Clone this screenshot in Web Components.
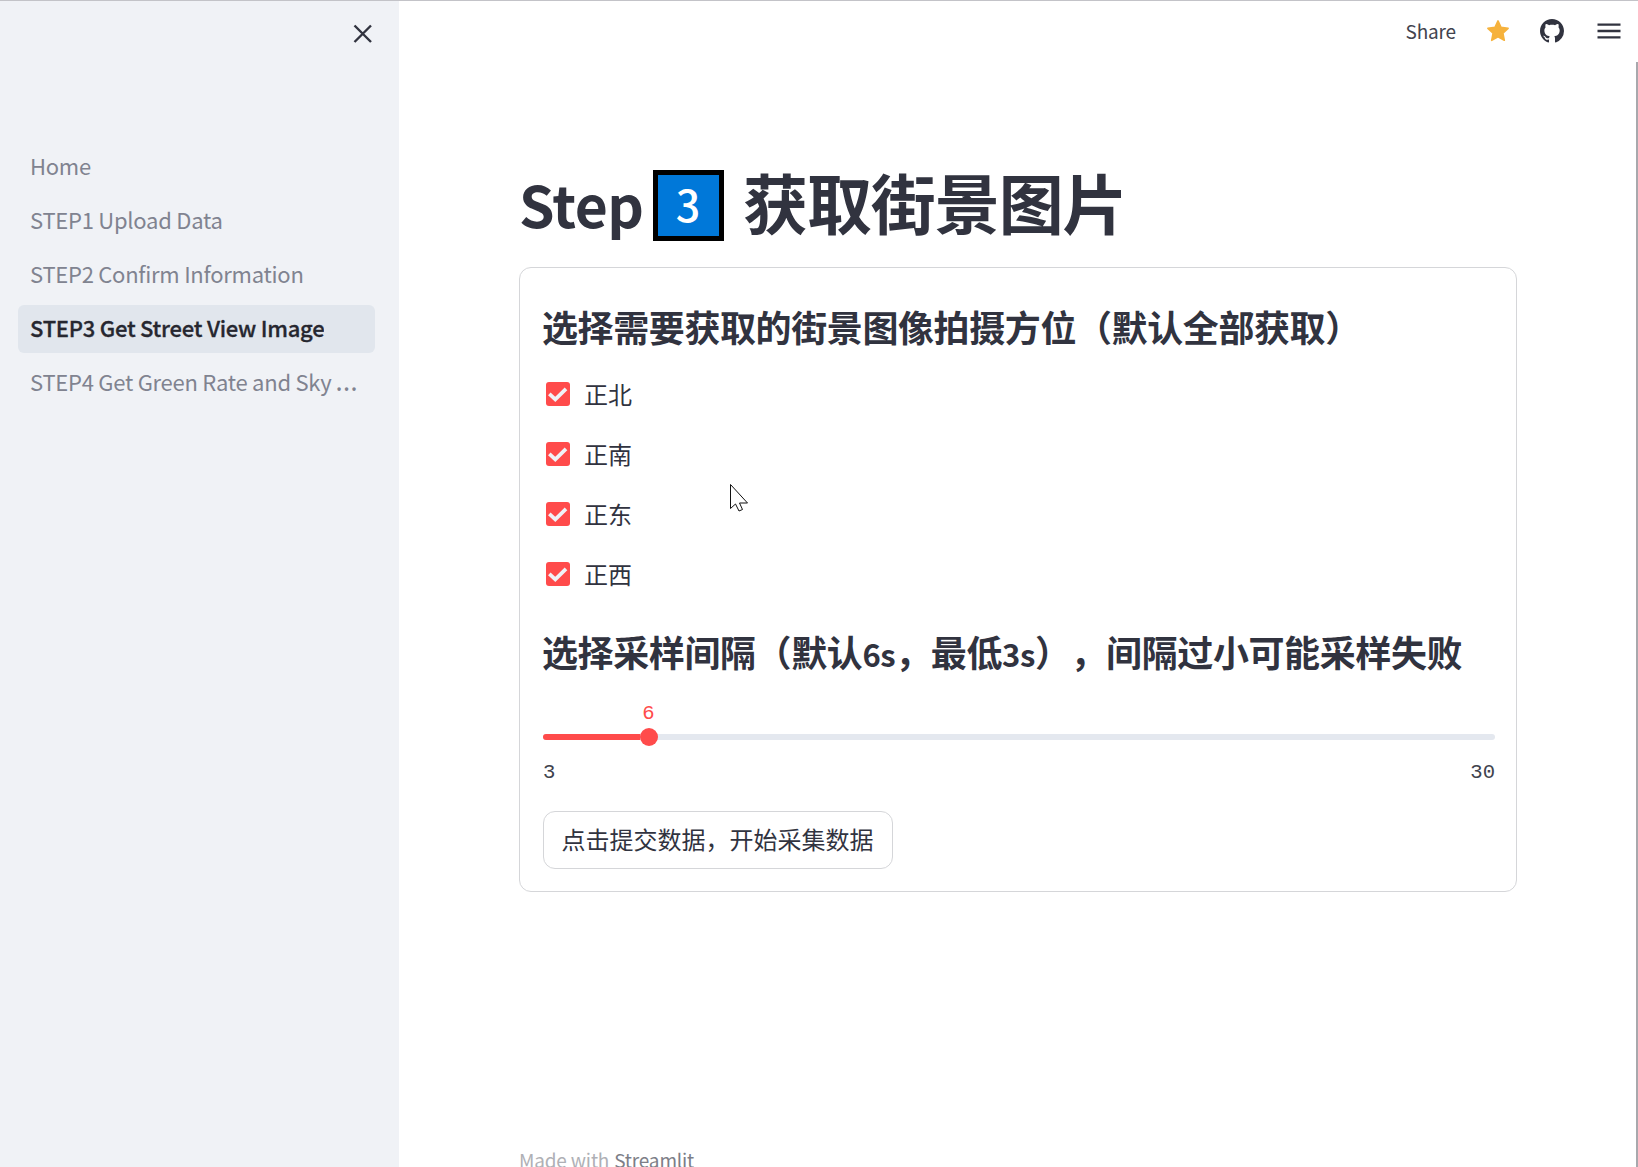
<!DOCTYPE html>
<html lang="zh-CN"><head><meta charset="utf-8"><title>Street View</title>
<style>
html,body{margin:0;height:100%;overflow:hidden;background:#fff}
body{font-family:"Noto Sans CJK SC",sans-serif;color:#31333f;text-spacing-trim:space-all}
</style></head><body>
<street-app></street-app>
<script>
const define=(name,html)=>{
  const t=document.createElement('template');t.innerHTML=html;
  customElements.define(name,class extends HTMLElement{
    constructor(){super();this.attachShadow({mode:'open'}).append(t.content.cloneNode(true));}
  });
};
define('nav-item',`<style>
:host{display:flex;align-items:center;box-sizing:border-box;height:48px;margin-bottom:6px;padding:0 12px 3px;border-radius:6px;font-size:22px;line-height:45px;color:#808390;letter-spacing:-.25px}
:host([active]){background:#e1e6ed;color:#262730;font-weight:500;-webkit-text-stroke:.3px #262730}
span{overflow:hidden;white-space:nowrap}
::slotted(i){font:29px/24px "Open Sans",sans-serif;letter-spacing:0;margin-left:-1px}
</style><span><slot></slot></span>`);
define('side-bar',`<style>
:host{display:flex;flex-direction:column;width:399px;background:#f0f2f6;flex:none;box-sizing:border-box}
header{display:flex;justify-content:flex-end;box-sizing:border-box;padding:23px 26px 0 0;height:142px}
nav{display:flex;flex-direction:column;padding:0 24px 0 18px}
</style><header><svg width="20" height="20" viewBox="0 0 20 20"><path d="M1.5 1.5 18 18M18 1.5 1.5 18" stroke="#31333f" stroke-width="2.4" fill="none"/></svg></header>
<nav><slot></slot></nav>`);
define('top-bar',`<style>
:host{display:flex;flex:none;box-sizing:border-box;align-items:center;height:61px;padding:0 17px 1px 0;justify-content:flex-end}
span{font-size:19px;line-height:28px;color:#41434e;letter-spacing:-.15px;margin-right:30px;padding-bottom:1px}
svg{display:block}
.star{margin-right:30px}.gh{margin-right:33px}
</style><span>Share</span>
<svg class="star" width="24" height="24" viewBox="0 0 24 24"><path d="M12 1.9l3 6.5 7.1.9-5.2 4.9 1.4 7.1-6.3-3.5-6.3 3.5 1.4-7.1L1.9 9.3l7.1-.9z" fill="#f6b23c" stroke="#f6b23c" stroke-width="1.6" stroke-linejoin="round"/></svg>
<svg class="gh" width="24" height="24" viewBox="0 0 16 16"><path fill="#31333f" d="M8 0C3.58 0 0 3.58 0 8c0 3.54 2.29 6.53 5.47 7.59.4.07.55-.17.55-.38 0-.19-.01-.82-.01-1.49-2.01.37-2.53-.49-2.69-.94-.09-.23-.48-.94-.82-1.13-.28-.15-.68-.52-.01-.53.63-.01 1.08.58 1.23.82.72 1.21 1.87.87 2.33.66.07-.52.28-.87.51-1.07-1.78-.2-3.64-.89-3.64-3.95 0-.87.31-1.59.82-2.15-.08-.2-.36-1.02.08-2.12 0 0 .67-.21 2.2.82.64-.18 1.32-.27 2-.27s1.36.09 2 .27c1.53-1.04 2.2-.82 2.2-.82.44 1.1.16 1.92.08 2.12.51.56.82 1.27.82 2.15 0 3.07-1.87 3.75-3.65 3.95.29.25.54.73.54 1.48 0 1.07-.01 1.93-.01 2.2 0 .21.15.46.55.38A8.01 8.01 0 0 0 16 8c0-4.42-3.58-8-8-8z"/></svg>
<svg width="24" height="24" viewBox="0 0 24 24"><path d="M.5 5.6h23M.5 12h23M.5 18.4h23" stroke="#31333f" stroke-width="2.4"/></svg>`);
define('page-title',`<style>
:host{display:flex;align-items:center;height:72px;font-weight:700;white-space:nowrap;line-height:72px}
.a{font-size:57px;letter-spacing:-.5px;padding-bottom:5px}
.k{box-sizing:border-box;width:71px;height:71px;border:5px solid #000;background:#0078d9;color:#fff;font-size:43px;font-weight:500;line-height:56px;text-align:center;margin:0 19.500px 0 9px}
.c{font-size:65px;letter-spacing:-1.1px;padding-bottom:8px}
</style><span class="a"><slot name="step"></slot></span><span class="k"><slot name="key"></slot></span><span class="c"><slot></slot></span>`);
define('form-card',`<style>
:host{display:flex;flex:none;flex-direction:column;box-sizing:border-box;width:998px;height:625px;border:1px solid #d5d6d9;border-radius:12px;padding:0 21px 0 23px}
</style><slot></slot>`);
define('sub-head',`<style>
:host{display:block;font-weight:700;font-size:36px;line-height:54px;letter-spacing:-.4px;white-space:nowrap;margin-left:-1px}
::slotted(i){font-style:normal;font-size:31px}
</style><slot></slot>`);
define('check-box',`<style>
:host{display:flex;align-items:center;height:36px;margin-bottom:24px;padding-left:3px;gap:14px;font-size:24px;line-height:36px}
svg{display:block}span{padding-bottom:1px}
</style><svg width="24" height="24" viewBox="0 0 24 24"><rect width="24" height="24" rx="3" fill="#ff4b4b"/><path d="M3.3 11.8 9.3 17.4 20 6.9" fill="none" stroke="#f0f2f6" stroke-width="3.7"/></svg><span><slot></slot></span>`);
define('range-slider',`<style>
:host{display:flex;flex-direction:column;font:20.6px/24px "Liberation Mono",monospace}
.v{width:211px;text-align:center;color:#ff4b4b;height:32px}
.t{display:flex;align-items:center;height:6px;border-radius:3px;background:#e4e8ef}
.f{width:97px;height:6px;border-radius:3px 0 0 3px;background:#ff4b4b}
.h{width:18px;height:18px;border-radius:9px;background:#ff4b4b}
.l{display:flex;justify-content:space-between;margin-top:21px;color:#41434e}
</style><div class="v"><slot name="value"></slot></div><div class="t"><div class="f"></div><div class="h"></div></div><div class="l"><slot name="min"></slot><slot name="max"></slot></div>`);
define('action-button',`<style>
:host{display:flex;align-items:center;justify-content:center;box-sizing:border-box;width:350px;height:58px;border:1px solid #d5d6d9;border-radius:12px;font-size:24px;line-height:36px;white-space:nowrap;padding:0 1px 2px 0}
</style><slot></slot>`);
define('page-footer',`<style>
:host{display:flex;flex:none;gap:5px;font-size:19px;line-height:28px;color:#afb0b5;white-space:nowrap;letter-spacing:-.18px}
::slotted(b){font-weight:400;color:#7d7e87}
</style><slot></slot>`);
define('mouse-pointer',`<style>
:host{position:absolute;left:729px;top:482px;line-height:0}
</style><svg width="20" height="30" viewBox="0 0 20 30"><path d="M1.5 1.5v24l5-4.5 3.5 7 3.5-1.500-3-6.500h8z" fill="#fff" stroke="#111" stroke-width="1"/></svg>`);
define('street-app',`<style>
:host{display:flex;position:relative;box-sizing:border-box;height:1167px;width:1638px;border-top:1px solid #c3c3c8;overflow:hidden}
main{display:flex;flex-direction:column;flex:1;position:relative}
.body{display:flex;flex:none;flex-direction:column;padding:107px 0 0 120px}
form-card{margin-top:26px}
.h1{margin-top:31px}.checks{display:flex;flex-direction:column;margin-top:23px}
.h2{margin-top:8px}
range-slider{margin-top:21px}action-button{margin-top:26px}
page-footer{margin-top:254px}
.bar{position:absolute;right:0;top:61px;bottom:0;width:2px;background:#a8a8ad}
</style>
<side-bar><nav-item>Home</nav-item><nav-item>STEP1 Upload Data</nav-item><nav-item>STEP2 Confirm Information</nav-item><nav-item active>STEP3 Get Street View Image</nav-item><nav-item>STEP4 Get Green Rate and Sky <i>…</i></nav-item></side-bar>
<main><top-bar></top-bar><div class="body">
<page-title><span slot="step">Step</span><span slot="key">3</span>获取街景图片</page-title>
<form-card><sub-head class="h1">选择需要获取的街景图像拍摄方位（默认全部获取）</sub-head>
<div class="checks"><check-box>正北</check-box><check-box>正南</check-box><check-box>正东</check-box><check-box>正西</check-box></div>
<sub-head class="h2">选择采样间隔（默认<i>6s</i>，最低<i>3s</i>），间隔过小可能采样失败</sub-head>
<range-slider><span slot="value">6</span><span slot="min">3</span><span slot="max">30</span></range-slider>
<action-button>点击提交数据，开始采集数据</action-button></form-card>
<page-footer><span>Made with</span><b>Streamlit</b></page-footer></div><div class="bar"></div></main>
<mouse-pointer></mouse-pointer>`);
</script></body></html>
